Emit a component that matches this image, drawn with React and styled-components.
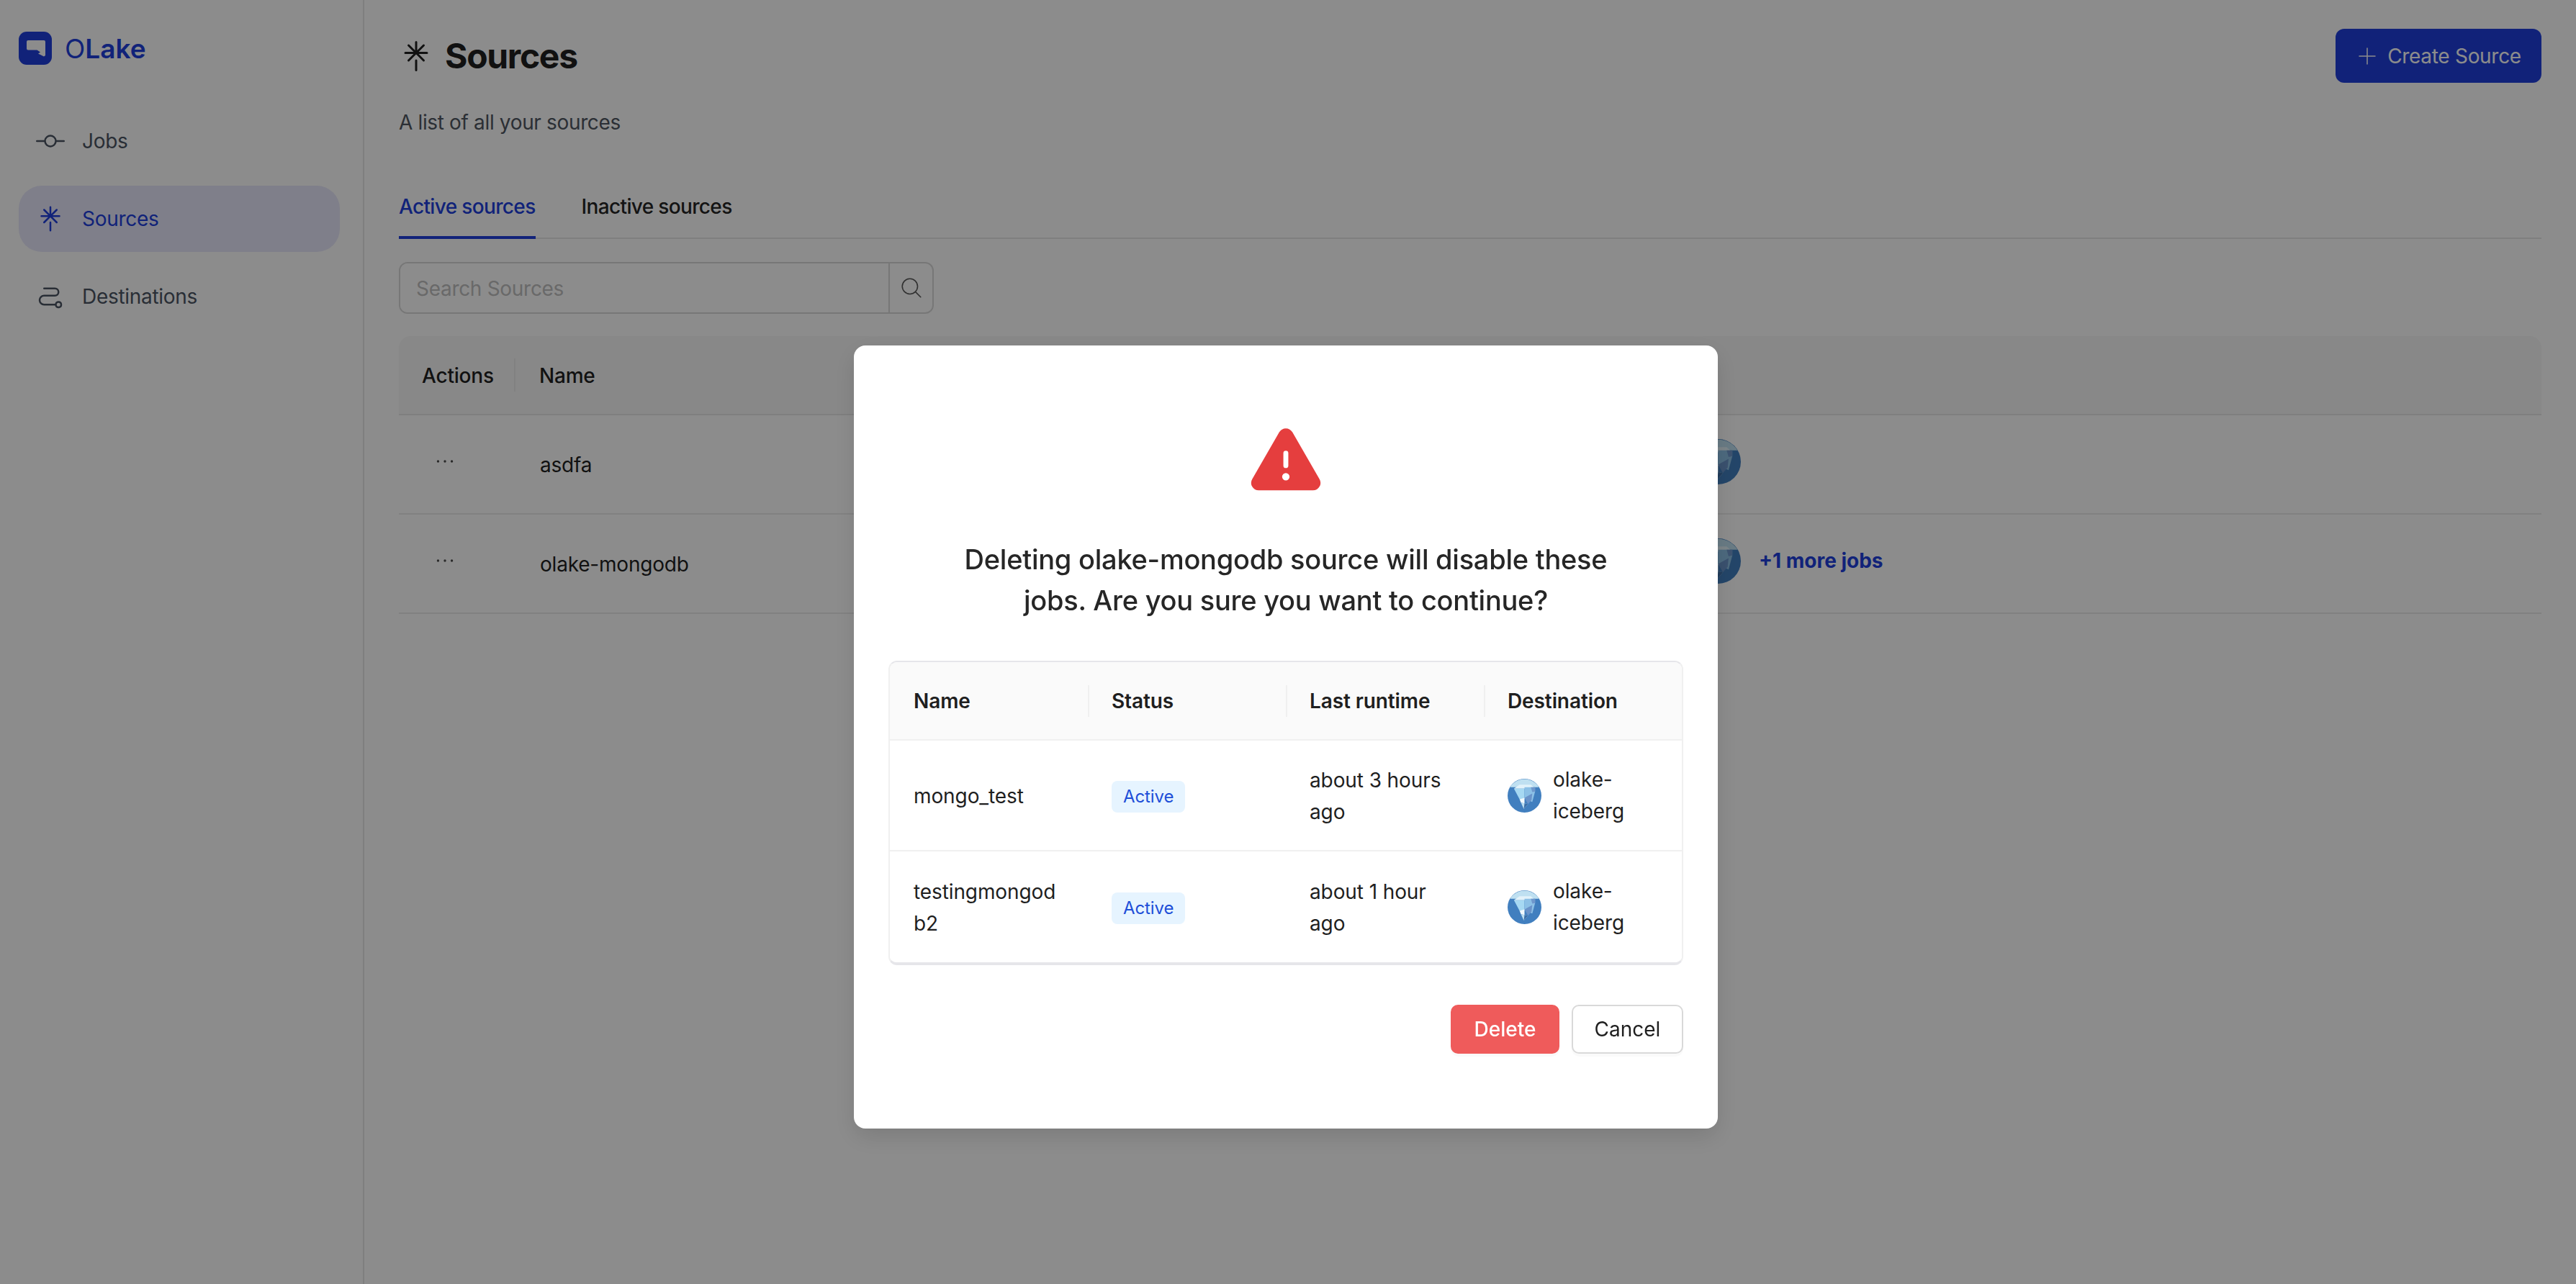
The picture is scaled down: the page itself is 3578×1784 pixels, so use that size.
import React from "react";
import styled, { createGlobalStyle } from "styled-components";
import {
  PiGitCommit,
  PiLinktreeLogo,
  PiPath,
  PiPlusLight,
  PiDotsThree,
  PiWarningFill,
  PiMagnifyingGlassLight,
} from "react-icons/pi";

const BRAND = "#203fdd";

const GlobalStyle = createGlobalStyle`
  * { box-sizing: border-box; }
  body {
    margin: 0;
    background: #fff;
    font-family: Inter, "Liberation Sans", sans-serif;
    color: #1f1f1f;
  }
`;

const Page = styled.div`
  display: flex;
  min-height: 100vh;
`;

const Sidebar = styled.aside`
  width: 506px;
  flex-shrink: 0;
  padding: 44px 32px 0 26px;
  border-right: 2px solid #e8e8e8;
`;

const Brand = styled.div`
  display: flex;
  align-items: center;
  gap: 18px;
  height: 46px;
`;

const BrandName = styled.span`
  font-size: 37px;
  font-weight: 600;
  color: ${BRAND};

  b {
    font-weight: 400;
  }
`;

const Nav = styled.nav`
  display: flex;
  flex-direction: column;
  gap: 16px;
  margin-top: 60px;
`;

const NavItem = styled.div`
  display: flex;
  align-items: center;
  gap: 24px;
  height: 92px;
  padding-left: 24px;
  border-radius: 32px;
  font-size: 28px;
  letter-spacing: -0.3px;
  color: ${(p) => (p.$active ? BRAND : "#4b5563")};
  background: ${(p) => (p.$active ? "#e8e8fb" : "transparent")};
`;

const Main = styled.main`
  flex: 1;
  min-width: 0;
  padding: 40px 48px 0;
`;

const TitleRow = styled.div`
  display: flex;
  justify-content: space-between;
  align-items: center;
  height: 75px;
`;

const Title = styled.h1`
  display: flex;
  align-items: center;
  gap: 16px;
  margin: 0;
  font-size: 48px;
  font-weight: 700;
  letter-spacing: -1.3px;
  color: #1f1f1f;
`;

const CreateButton = styled.button`
  display: flex;
  align-items: center;
  justify-content: center;
  gap: 12px;
  height: 75px;
  width: 286px;
  border: none;
  border-radius: 12px;
  background: ${BRAND};
  color: #fff;
  font: 400 28px Inter, sans-serif;
  letter-spacing: -0.3px;
`;

const Subtitle = styled.p`
  margin: 35px 0 0;
  font-size: 28px;
  line-height: 40px;
  letter-spacing: -0.35px;
  color: #4f5661;
`;

const Tabs = styled.div`
  display: flex;
  gap: 64px;
  margin-top: 77px;
  border-bottom: 2px solid #e8e8e8;
  height: 65px;
`;

const Tab = styled.div`
  height: 65px;
  font-size: 28px;
  line-height: 40px;
  font-weight: 500;
  letter-spacing: -0.65px;
  color: ${(p) => (p.$active ? BRAND : "#262626")};
  border-bottom: ${(p) => (p.$active ? `4px solid ${BRAND}` : "none")};
`;

const SearchBox = styled.div`
  display: flex;
  width: 743px;
  height: 72px;
  margin-top: 32px;
  border: 2px solid #d9d9d9;
  border-radius: 12px;
  overflow: hidden;
`;

const SearchInput = styled.input`
  flex: 1;
  min-width: 0;
  padding: 2px 22px 0;
  border: none;
  outline: none;
  font: 400 28px Inter, sans-serif;
  letter-spacing: -0.3px;
  &::placeholder {
    color: #bfbfbf;
  }
`;

const SearchIcon = styled.div`
  display: flex;
  align-items: center;
  justify-content: center;
  width: 61px;
  border-left: 2px solid #d9d9d9;
  color: #595959;
`;

const SourceTable = styled.div`
  margin-top: 31px;
`;

const SourceRow = styled.div`
  display: grid;
  grid-template-columns: 162px 1639px 1fr;
  align-items: center;
  height: ${(p) => (p.$head ? "110px" : "138px")};
  border-bottom: 2px solid ${(p) => (p.$head ? "#e8e8e8" : "#ececec")};
  background: ${(p) => (p.$head ? "#f8f8f8" : "transparent")};
  border-radius: ${(p) => (p.$head ? "16px 16px 0 0" : "0")};
`;

const HeadCell = styled.div`
  padding: 2px 0 0 ${(p) => (p.$divided ? "32px" : "33px")};
  font-size: 28px;
  font-weight: 500;
  letter-spacing: -0.2px;
  color: #1f1f1f;
  ${(p) => p.$divided && "border-right: 2px solid #ececec; line-height: 44px;"}
`;

const DotsCell = styled.div`
  display: flex;
  padding-left: 46px;
  margin-bottom: 9px;
  color: #4b4b4b;
`;

const NameCell = styled.div`
  padding: 2px 0 0 34px;
  font-size: 28px;
  letter-spacing: -0.2px;
  color: #1f1f1f;
`;

const JobsCell = styled.div`
  display: flex;
  align-items: center;
  gap: 25px;
  margin-bottom: 8px;
`;

const MoreJobs = styled.span`
  font-size: 28px;
  font-weight: 700;
  color: ${BRAND};
`;

const Overlay = styled.div`
  position: fixed;
  inset: 0;
  display: flex;
  justify-content: center;
  align-items: flex-start;
  padding: 480px 6px 0 0;
  background: rgba(0, 0, 0, 0.45);
`;

const Modal = styled.div`
  display: flex;
  flex-direction: column;
  align-items: center;
  width: 1200px;
  height: 1088px;
  padding: 105px 48px 0;
  background: #fff;
  border-radius: 16px;
  box-shadow: 0 12px 32px rgba(0, 0, 0, 0.12);
`;

const Warning = styled.div`
  display: flex;
  color: #e53e3e;
  line-height: 0;
`;

const Heading = styled.h2`
  width: 920px;
  margin: 54px 0 0;
  text-align: center;
  font-size: 38px;
  line-height: 57px;
  font-weight: 500;
  letter-spacing: -0.25px;
  color: #262626;
`;

const JobTable = styled.div`
  width: 100%;
  margin-top: 55px;
  border: 2px solid #f0f0f0;
  border-top-color: #e6e6ea;
  border-bottom: 4px solid #e6e6ea;
  border-radius: 12px;
  overflow: hidden;
`;

const JobRow = styled.div`
  display: grid;
  grid-template-columns: repeat(4, 1fr);
  align-items: center;
  height: ${(p) => (p.$head ? "109px" : "154px")};
  background: ${(p) => (p.$head ? "#fafafa" : "#fff")};
  border-bottom: 2px solid #f0f0f0;
  &:last-child {
    border-bottom: none;
  }
`;

const JobHead = styled.div`
  height: 44px;
  padding: 2px 32px 0 ${(p) => (p.$first ? "33px" : "31px")};
  font-size: 28px;
  line-height: 40px;
  font-weight: 600;
  letter-spacing: -0.1px;
  color: #1f1f1f;
  border-left: ${(p) => (p.$first ? "none" : "2px solid #f0f0f0")};
`;

const JobCell = styled.div`
  padding: 2px 33px 0;
  font-size: 28px;
  line-height: 44px;
  letter-spacing: -0.1px;
  color: #1f1f1f;
  overflow-wrap: anywhere;
`;

const Badge = styled.span`
  display: inline-block;
  height: 44px;
  padding: 0 16px;
  border-radius: 8px;
  background: #e6f4ff;
  color: #1d4ed8;
  font-size: 24px;
  line-height: 44px;
`;

const DestCell = styled(JobCell)`
  display: flex;
  align-items: center;
  gap: 16px;
  padding: 0 24px 0 33px;
`;

const Actions = styled.div`
  display: flex;
  justify-content: flex-end;
  gap: 17px;
  width: 100%;
  margin-top: 55px;
`;

const DeleteButton = styled.button`
  width: 151px;
  height: 68px;
  border: none;
  border-radius: 10px;
  background: #ef5b5b;
  color: #fff;
  font: 500 28px Inter, sans-serif;
  box-shadow: 0 4px 0 rgba(0, 0, 0, 0.02);
`;

const CancelButton = styled.button`
  width: 155px;
  height: 68px;
  border: 2px solid #d9d9d9;
  border-radius: 10px;
  background: #fff;
  color: #1f1f1f;
  font: 400 28px Inter, sans-serif;
  box-shadow: 0 4px 0 rgba(0, 0, 0, 0.02);
`;

const LogoMark = () => (
  <svg width="46" height="46" viewBox="0 0 46 46">
    <rect width="46" height="46" rx="11" fill={BRAND} />
    <path
      d="M13 12h22a2 2 0 0 1 2 2v19l-2 1.500-8-4 3-2-4.500-3H13a2 2 0 0 1-2-2V14a2 2 0 0 1 2-2z"
      fill="#fff"
    />
  </svg>
);

const Iceberg = ({ size }) => (
  <svg width={size} height={size} viewBox="0 0 48 48" style={{ flexShrink: 0 }}>
    <circle cx="24" cy="24" r="24" fill="#417fbf" />
    <path d="M3.500 12A24 24 0 0 1 44.500 12z" fill="#bfe0f1" />
    <path d="M9 14l8-5.500h16l6 5.500z" fill="#e2f2fa" />
    <path d="M9 14h15v14l-7 1z" fill="#a6d8f2" />
    <path d="M24 12h15v6l-4 15-11-5z" fill="#8cc0e6" />
    <path d="M33 12h6v6l-4 1z" fill="#6f97cc" />
    <path d="M24 27l11-6-1 9-5 6z" fill="#6a93c9" />
    <path d="M17 29l7-2 0 8-5-1z" fill="#f1f9fd" />
    <path d="M19 34l5 1 5 1-6 7z" fill="#bcdff2" />
    <path d="M24 35l5 1-6 7z" fill="#3d6fa8" />
  </svg>
);

const jobs = [
  { name: "mongo_test", runtime: "about 3 hours ago" },
  { name: "testingmongodb2", runtime: "about 1 hour ago" },
];

function App() {
  return (
    <>
      <GlobalStyle />
      <Page>
        <Sidebar>
          <Brand>
            <LogoMark />
            <BrandName>
              <b>O</b>Lake
            </BrandName>
          </Brand>
          <Nav>
            <NavItem>
              <PiGitCommit size={40} />
              Jobs
            </NavItem>
            <NavItem $active>
              <PiLinktreeLogo size={40} />
              Sources
            </NavItem>
            <NavItem>
              <PiPath size={40} />
              Destinations
            </NavItem>
          </Nav>
        </Sidebar>

        <Main>
          <TitleRow>
            <Title>
              <PiLinktreeLogo size={48} />
              Sources
            </Title>
            <CreateButton>
              <PiPlusLight size={32} />
              Create Source
            </CreateButton>
          </TitleRow>
          <Subtitle>A list of all your sources</Subtitle>

          <Tabs>
            <Tab $active>Active sources</Tab>
            <Tab>Inactive sources</Tab>
          </Tabs>

          <SearchBox>
            <SearchInput placeholder="Search Sources" />
            <SearchIcon>
              <PiMagnifyingGlassLight size={34} />
            </SearchIcon>
          </SearchBox>

          <SourceTable>
            <SourceRow $head>
              <HeadCell $divided>Actions</HeadCell>
              <HeadCell>Name</HeadCell>
            </SourceRow>
            <SourceRow>
              <DotsCell>
                <PiDotsThree size={36} />
              </DotsCell>
              <NameCell>asdfa</NameCell>
              <JobsCell>
                <Iceberg size={63} />
              </JobsCell>
            </SourceRow>
            <SourceRow>
              <DotsCell>
                <PiDotsThree size={36} />
              </DotsCell>
              <NameCell>olake-mongodb</NameCell>
              <JobsCell>
                <Iceberg size={63} />
                <MoreJobs>+1 more jobs</MoreJobs>
              </JobsCell>
            </SourceRow>
          </SourceTable>
        </Main>
      </Page>

      <Overlay>
        <Modal>
          <Warning>
            <PiWarningFill size={110} />
          </Warning>
          <Heading>
            Deleting olake-mongodb source will disable these jobs. Are you sure
            you want to continue?
          </Heading>

          <JobTable>
            <JobRow $head>
              <JobHead $first>Name</JobHead>
              <JobHead>Status</JobHead>
              <JobHead>Last runtime</JobHead>
              <JobHead>Destination</JobHead>
            </JobRow>
            {jobs.map((job) => (
              <JobRow key={job.name}>
                <JobCell>{job.name}</JobCell>
                <JobCell>
                  <Badge>Active</Badge>
                </JobCell>
                <JobCell>{job.runtime}</JobCell>
                <DestCell>
                  <Iceberg size={47} />
                  <span>olake-iceberg</span>
                </DestCell>
              </JobRow>
            ))}
          </JobTable>

          <Actions>
            <DeleteButton>Delete</DeleteButton>
            <CancelButton>Cancel</CancelButton>
          </Actions>
        </Modal>
      </Overlay>
    </>
  );
}

export default App;
